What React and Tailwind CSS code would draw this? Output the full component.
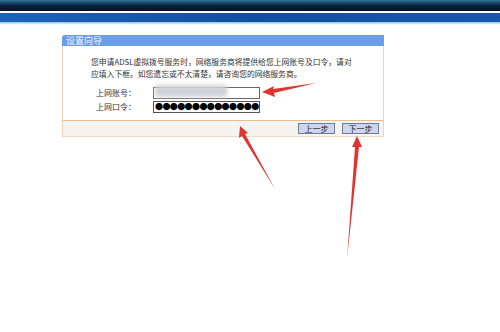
import React from "react";

const font = { fontFamily: '"Noto Sans CJK SC", "Noto Sans", sans-serif' };

// ----- red arrows drawn over the page ----- //
function Arrows() {
  return (
    <svg className="pointer-events-none absolute left-0 top-0" width="500" height="332">
      {/* arrow to the account box */}
      <polygon points="262,92 274,86 273,89 316,83 274,93 275,97" fill="#e0342f" />
      {/* arrow to the footer */}
      <polygon points="240,126 248,133 245,134 275,189 242,136 239,138" fill="#e0342f" />
      {/* arrow to the next button */}
      <polygon points="357,136 362,147 359,147 347,259 355,147 352,147" fill="#e0342f" />
    </svg>
  );
}

function App() {
  return (
    <div className="relative h-[332px] w-[500px] overflow-hidden bg-white" style={font}>
      {/* top banner */}
      <div className="h-[11px] bg-gradient-to-b from-[#2f7595] via-[#0c2444] to-[#050f24]" />
      <div className="h-[2px] bg-white" />
      <div className="h-[9px] bg-gradient-to-r from-[#1b63b8] via-[#134f9f] to-[#1a56ac]" />
      <div className="h-[3px] bg-gradient-to-b from-[#8fc2e6] to-white" />

      {/* wizard box */}
      <div className="ml-[62px] mt-[10px] w-[322px]">
        <div className="flex h-[11px] items-center rounded-tl-[3px] bg-[#6c9de9] pl-[4px] text-[9px] leading-none text-[#eef4ff]">
          设置向导
        </div>
        <div className="border-x border-[#ecd3b4] bg-white pb-[7px] pl-[28px] pt-[10px] text-[7.8px] leading-[12px] text-[#333]">
          <p>您申请ADSL虚拟拨号服务时，网络服务商将提供给您上网账号及口令，请对</p>
          <p>应填入下框。如您遗忘或不太清楚，请咨询您的网络服务商。</p>
          <div className="mt-[7px] flex flex-col gap-[2px] pl-[5px]">
            <div className="flex items-center">
              <span className="w-[57px] text-[8px]">上网账号：</span>
              <div className="relative h-[12px] w-[107px] border border-[#666] bg-white">
                <div className="absolute left-[1px] top-[-3px] h-[12px] w-[72px] bg-[#cfd1d6] blur-[2px]" />
              </div>
            </div>
            <div className="flex items-center">
              <span className="w-[57px] text-[8px]">上网口令：</span>
              <div className="flex h-[12px] w-[107px] items-center overflow-hidden border border-[#555] bg-white pl-[1px] text-[8px] leading-none tracking-[-0.6px] text-black">
                ●●●●●●●●●●●●●●
              </div>
            </div>
          </div>
        </div>
        <div className="flex h-[17px] items-center justify-end gap-[7px] border border-t-[#e6bf95] border-x-[#ecd3b4] border-b-[#efd9bf] bg-[#f6f4f1] pr-[4px]">
          <button className="h-[11px] w-[37px] border border-[#6f7c98] bg-[#cdd6ee] text-[8px] leading-none text-[#222]">
            上一步
          </button>
          <button className="h-[11px] w-[37px] border border-[#6f7c98] bg-[#cdd6ee] text-[8px] leading-none text-[#222]">
            下一步
          </button>
        </div>
      </div>

      <Arrows />
    </div>
  );
}

export default App;
